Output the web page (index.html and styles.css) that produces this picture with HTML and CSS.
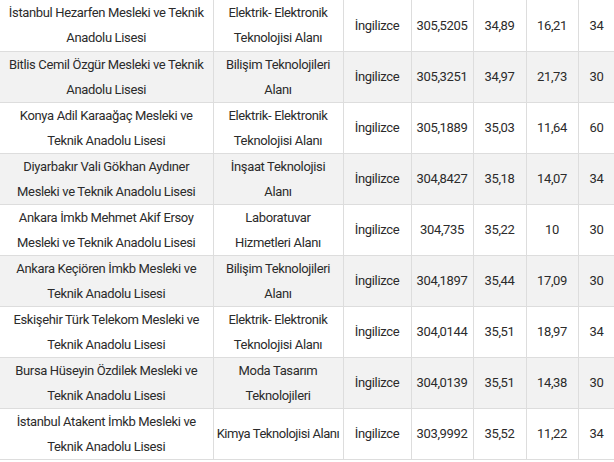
FILE: index.html
```html
<!DOCTYPE html>
<html lang="tr">
<head>
<meta charset="utf-8">
<link rel="stylesheet" href="styles.css">
</head>
<body>
<table class="results">
  <colgroup>
    <col class="c-school"><col class="c-dept"><col class="c-lang"><col class="c-score"><col class="c-a"><col class="c-b"><col class="c-q">
  </colgroup>
  <tbody>
    <tr><td>İstanbul Hezarfen Mesleki ve Teknik Anadolu Lisesi</td><td>Elektrik- Elektronik<br>Teknolojisi Alanı</td><td>İngilizce</td><td>305,5205</td><td>34,89</td><td>16,21</td><td>34</td></tr>
    <tr><td>Bitlis Cemil Özgür Mesleki ve Teknik Anadolu Lisesi</td><td>Bilişim Teknolojileri<br>Alanı</td><td>İngilizce</td><td>305,3251</td><td>34,97</td><td>21,73</td><td>30</td></tr>
    <tr><td>Konya Adil Karaağaç Mesleki ve Teknik Anadolu Lisesi</td><td>Elektrik- Elektronik<br>Teknolojisi Alanı</td><td>İngilizce</td><td>305,1889</td><td>35,03</td><td>11,64</td><td>60</td></tr>
    <tr><td>Diyarbakır Vali Gökhan Aydıner Mesleki ve Teknik Anadolu Lisesi</td><td>İnşaat Teknolojisi<br>Alanı</td><td>İngilizce</td><td>304,8427</td><td>35,18</td><td>14,07</td><td>34</td></tr>
    <tr><td>Ankara İmkb Mehmet Akif Ersoy Mesleki ve Teknik Anadolu Lisesi</td><td>Laboratuvar<br>Hizmetleri Alanı</td><td>İngilizce</td><td>304,735</td><td>35,22</td><td>10</td><td>30</td></tr>
    <tr><td>Ankara Keçiören İmkb Mesleki ve Teknik Anadolu Lisesi</td><td>Bilişim Teknolojileri<br>Alanı</td><td>İngilizce</td><td>304,1897</td><td>35,44</td><td>17,09</td><td>30</td></tr>
    <tr><td>Eskişehir Türk Telekom Mesleki ve Teknik Anadolu Lisesi</td><td>Elektrik- Elektronik<br>Teknolojisi Alanı</td><td>İngilizce</td><td>304,0144</td><td>35,51</td><td>18,97</td><td>34</td></tr>
    <tr><td>Bursa Hüseyin Özdilek Mesleki ve Teknik Anadolu Lisesi</td><td>Moda Tasarım<br>Teknolojileri</td><td>İngilizce</td><td>304,0139</td><td>35,51</td><td>14,38</td><td>30</td></tr>
    <tr><td>İstanbul Atakent İmkb Mesleki ve Teknik Anadolu Lisesi</td><td class="one-line">Kimya Teknolojisi Alanı</td><td>İngilizce</td><td>303,9992</td><td>35,52</td><td>11,22</td><td>34</td></tr>
  </tbody>
</table>
</body>
</html>
```
FILE: styles.css
```css
html, body {
  margin: 0;
  padding: 0;
  background: #ffffff;
}
body {
  font-family: "Roboto", "Liberation Sans", sans-serif;
  color: #2b2b2b;
  overflow: hidden;
}
.results {
  border-collapse: collapse;
  table-layout: fixed;
  width: 615px;
  font-size: 13px;
  line-height: 25px;
  letter-spacing: -0.35px;
}
.c-school { width: 213px; }
.c-dept { width: 130px; }
.c-lang { width: 68px; }
.c-score { width: 62px; }
.c-a { width: 53px; }
.c-b { width: 52px; }
.c-q { width: 37px; }
.results td {
  border: 1px solid #dddddd;
  border-top: none;
  padding: 0 2px;
  text-align: center;
  vertical-align: middle;
  height: 51px;
  box-sizing: border-box;
}
.results td.one-line {
  white-space: nowrap;
  letter-spacing: -0.45px;
  padding: 0;
}
.results tr:nth-child(even) td {
  background: #f2f2f2;
}
.results td:first-child {
  border-left: none;
}
```
